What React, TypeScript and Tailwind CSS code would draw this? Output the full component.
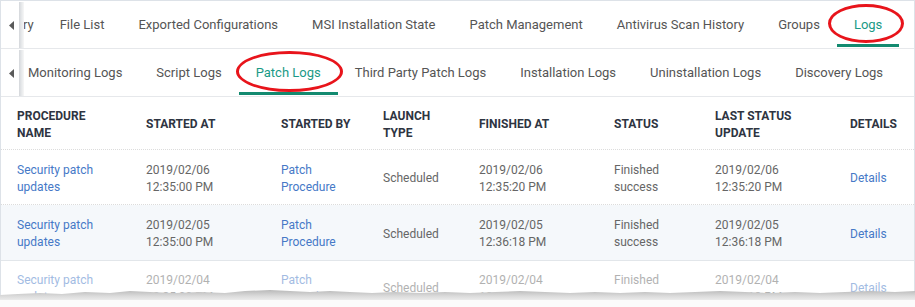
import React from 'react';

interface LogRow {
  started: [string, string];
  finished: [string, string];
  updated: [string, string];
}

const topTabs = ['File List', 'Exported Configurations', 'MSI Installation State', 'Patch Management', 'Antivirus Scan History', 'Groups'];
const subTabs = ['Script Logs'];
const subTabsAfter = ['Third Party Patch Logs', 'Installation Logs', 'Uninstallation Logs', 'Discovery Logs'];

const rows: LogRow[] = [
  { started: ['2019/02/06', '12:35:00 PM'], finished: ['2019/02/06', '12:35:20 PM'], updated: ['2019/02/06', '12:35:20 PM'] },
  { started: ['2019/02/05', '12:35:00 PM'], finished: ['2019/02/05', '12:36:18 PM'], updated: ['2019/02/05', '12:36:18 PM'] },
  { started: ['2019/02/04', '12:35:00 PM'], finished: ['2019/02/04', '12:35:18 PM'], updated: ['2019/02/04', '12:35:18 PM'] },
];

const cols = 'grid grid-cols-[145px_135px_102px_96px_135px_101px_135px_1fr] items-center';

const ArrowLeft = () => (
  <div className="w-[18px] flex items-center justify-center pl-[2px]">
    <svg width="5" height="9" viewBox="0 0 5 9">
      <path d="M5 0 L0 4.5 L5 9 Z" fill="#5a5a5a" />
    </svg>
  </div>
);

const Separator = () => (
  <div className="w-[5px] self-stretch bg-gradient-to-r from-[#d4d7db] via-[#e6e8ea] to-[#f7f7f7]" />
);

const Circled: React.FC<{ label: string; ellipse: string }> = ({ label, ellipse }) => (
  <div className="relative px-[17px] h-full flex items-center whitespace-nowrap text-[#1a9a86]">
    {label}
    <div className="absolute left-0 right-0 bottom-[1px] h-[3px] bg-[#138a70]" />
    <div className={`absolute border-[3px] border-[#e8141b] rounded-[50%] ${ellipse}`} />
  </div>
);

const Cell2: React.FC<{ lines: [string, string]; link?: boolean }> = ({ lines, link }) => (
  <div className={link ? 'text-[#4679c7]' : 'text-[#666]'}>
    <div>{lines[0]}</div>
    <div>{lines[1]}</div>
  </div>
);

const App: React.FC = () => {
  return (
    <div className="w-[915px] h-[307px] bg-white overflow-hidden relative font-['Roboto',sans-serif]">
      <div className="border border-[#dde2e8] border-b-0 h-full">
        {/* Top tabs */}
        <div className="flex items-stretch h-[48px] pt-[1px] border-b border-[#e6e8eb] text-[13px] text-[#555]">
          <ArrowLeft />
          <Separator />
          <div className="flex items-stretch overflow-hidden flex-1">
            <div className="pr-[9px] ml-[-1px] flex items-center">ry</div>
            {topTabs.map((t) => (
              <div key={t} className="px-[17px] flex items-center whitespace-nowrap">{t}</div>
            ))}
            <Circled label="Logs" ellipse="-left-[9px] -right-[5px] top-[2px] bottom-[5px]" />
          </div>
        </div>

        {/* Sub tabs */}
        <div className="flex items-stretch h-[48px] pt-[1px] border-b border-[#e6e8eb] text-[13px] text-[#555]">
          <ArrowLeft />
          <Separator />
          <div className="flex items-stretch overflow-hidden flex-1">
            <div className="pl-[4px] pr-[17px] flex items-center whitespace-nowrap">Monitoring Logs</div>
            {subTabs.map((t) => (
              <div key={t} className="px-[17px] flex items-center whitespace-nowrap">{t}</div>
            ))}
            <Circled label="Patch Logs" ellipse="-left-[3px] -right-[5px] top-[1px] bottom-[4px]" />
            {subTabsAfter.map((t) => (
              <div key={t} className="px-[17px] flex items-center whitespace-nowrap">{t}</div>
            ))}
          </div>
        </div>

        {/* Table header */}
        <div className={`${cols} h-[53px] pt-[3px] border-b border-dotted border-[#dcdcdc] text-[12px] font-bold text-[#2e3441] leading-[17px]`}>
          <div className="pl-4">PROCEDURE<br />NAME</div>
          <div>STARTED AT</div>
          <div>STARTED BY</div>
          <div>LAUNCH<br />TYPE</div>
          <div>FINISHED AT</div>
          <div>STATUS</div>
          <div>LAST STATUS<br />UPDATE</div>
          <div>DETAILS</div>
        </div>

        {/* Rows */}
        {rows.map((r, i) => (
          <div
            key={i}
            className={`${cols} text-[12px] leading-[17px] ${
              i === 0 ? 'h-[55px] pt-[3px] border-b border-dotted border-[#dcdcdc]' : ''
            } ${i === 1 ? 'h-[56px] pt-[3px] bg-[#f5f8fb] border-b border-[#e2e6ea]' : ''} ${i === 2 ? 'h-[55px] opacity-50 items-start pt-[11px]' : ''}`}
          >
            <div className="pl-4">
              <Cell2 lines={['Security patch', 'updates']} link />
            </div>
            <Cell2 lines={r.started} />
            <Cell2 lines={['Patch', 'Procedure']} link />
            <div className={`text-[#666] ${i === 2 ? 'mt-[8px]' : ''}`}>Scheduled</div>
            <Cell2 lines={r.finished} />
            <Cell2 lines={['Finished', 'success']} />
            <Cell2 lines={r.updated} />
            <div className={`text-[#4679c7] ${i === 2 ? 'mt-[8px]' : ''}`}>Details</div>
          </div>
        ))}
      </div>

      {/* Torn paper edge */}
      <svg className="absolute left-0 bottom-0" width="915" height="20" viewBox="0 0 915 20">
        <defs>
          <linearGradient id="tear" x1="0" y1="0" x2="0" y2="1">
            <stop offset="0" stopColor="#b9b9b9" />
            <stop offset="0.35" stopColor="#dadada" />
            <stop offset="0.7" stopColor="#f3f3f3" />
            <stop offset="1" stopColor="#ffffff" />
          </linearGradient>
        </defs>
        <path
          d="M0 8 L18 7 L40 6 L62 7 L85 5 L110 6 L130 4 L150 5 L175 6 L200 5 L225 6 L245 4 L270 3 L290 4 L310 5 L330 4 L350 5 L372 6 L395 5 L420 6 L445 5 L470 6 L495 5 L520 4 L545 5 L570 6 L595 5 L620 6 L645 5 L670 6 L695 5 L720 4 L745 5 L770 6 L795 5 L820 6 L845 5 L870 4 L895 5 L915 4 L915 20 L0 20 Z"
          fill="url(#tear)"
        />
        <rect x="0" y="13" width="915" height="7" fill="#fbfbfb" />
      </svg>
    </div>
  );
};

export default App;
